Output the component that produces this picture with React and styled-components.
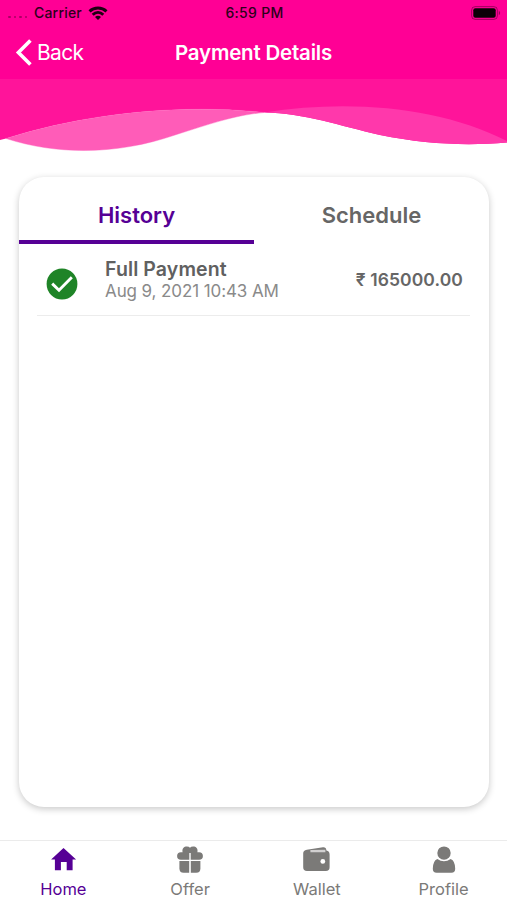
import React, { useState } from 'react';
import styled, { createGlobalStyle } from 'styled-components';

const tabs = ['History', 'Schedule'];

const payments = [
  { title: 'Full Payment', date: 'Aug 9, 2021 10:43 AM', amount: '₹ 165000.00' },
];

function WifiIcon() {
  return (
    <svg width="20" height="14" viewBox="0 0 20 14" fill="none" stroke="#1d0012" strokeWidth="2.9">
      <path d="M1.5 5.4C6.3 0.9 13.7 0.9 18.5 5.4" />
      <path d="M4.7 8.8C7.8 5.8 12.2 5.8 15.3 8.8" />
      <path d="M10 14L7 11C8.8 9.4 11.2 9.4 13 11Z" fill="#1d0012" stroke="none" />
    </svg>
  );
}

function BatteryIcon() {
  return (
    <svg width="30" height="14" viewBox="0 0 30 14">
      <rect x="0.6" y="0.6" width="25.8" height="12.8" rx="3.6" fill="none" stroke="#1d0012" strokeOpacity="0.4" />
      <rect x="2.3" y="2.3" width="22.4" height="9.4" rx="2" fill="#0c0007" />
      <path d="M27.8 4.8C29.6 5.5 29.6 8.5 27.8 9.2Z" fill="#1d0012" fillOpacity="0.45" />
    </svg>
  );
}

function BackIcon() {
  return (
    <svg width="17" height="27" viewBox="0 0 17 27" fill="none" stroke="#fff" strokeWidth="3.6">
      <path d="M15.4 1.4L3.4 13.5L15.4 25.6" />
    </svg>
  );
}

function CheckIcon() {
  return (
    <svg width="32" height="32" viewBox="0 0 32 32">
      <circle cx="16" cy="16" r="15.4" fill="#1f8427" />
      <path d="M6.2 15.6L13 22.2L25.8 9.2" fill="none" stroke="#fff" strokeWidth="2.9" />
    </svg>
  );
}

function HomeIcon() {
  return (
    <svg width="28" height="28" viewBox="0 0 28 28" fill="currentColor">
      <path d="M14.5 2.1L27.1 13.6H23.6V24.3H17.7V16H11.9V24.3H5.9V13.6H2.1Z" />
    </svg>
  );
}

function GiftIcon() {
  return (
    <svg width="28" height="28" viewBox="0 0 28 28" fill="currentColor">
      <path d="M13.3 13.8H4.9A3.8 3.8 0 0 1 4.9 6.2H6.6C5.8 2.4 8 0.4 10.9 0.4Q13 0.4 14 1.7Q15 0.4 17.1 0.4C20 0.4 22.2 2.4 21.4 6.2H23.1A3.8 3.8 0 0 1 23.1 13.8H14.7V7H13.3Z" />
      <path d="M3.4 15.1H13.2V26.8H7.6Q3.4 26.8 3.4 22.6Z" />
      <path d="M14.8 15.1H24.4V22.6Q24.4 26.8 20.2 26.8H14.8Z" />
    </svg>
  );
}

function WalletIcon() {
  return (
    <svg width="28" height="28" viewBox="0 0 28 28" fill="currentColor">
      <path d="M0.2 7.2Q0.2 4.2 3.8 3.7L20 1.2Q23.1 0.9 23.4 4.4Q26.6 4.8 26.6 8.4V21.2Q26.6 25 22.8 25H4Q0.2 25 0.2 21.2Z" />
      <path d="M7.4 4.1L22.4 3.7V6.2H7.4Z" fill="#fff" fillOpacity="0.65" />
      <circle cx="19.8" cy="15.4" r="2.4" fill="#fff" />
    </svg>
  );
}

function ProfileIcon() {
  return (
    <svg width="28" height="28" viewBox="0 0 28 28" fill="currentColor">
      <circle cx="14" cy="7.1" r="6.7" />
      <path d="M7.3 12.9Q14 17.4 20.7 12.9Q25.2 14.9 25.2 22.7Q25.2 26.8 21.4 26.8H6.6Q2.8 26.8 2.8 22.7Q2.8 14.9 7.3 12.9Z" />
    </svg>
  );
}

const navItems = [
  { label: 'Home', icon: <HomeIcon /> },
  { label: 'Offer', icon: <GiftIcon /> },
  { label: 'Wallet', icon: <WalletIcon /> },
  { label: 'Profile', icon: <ProfileIcon /> },
];

function App() {
  const [activeTab, setActiveTab] = useState('History');
  const [activePage, setActivePage] = useState('Home');

  return (
    <Screen>
      <GlobalStyle />
      <Header>
        <StatusBar>
          <Carrier>
            <Dots><i /><i /><i /><i /></Dots>
            <span>Carrier</span>
            <WifiIcon />
          </Carrier>
          <Time>6:59 PM</Time>
          <Battery><BatteryIcon /></Battery>
        </StatusBar>
        <TitleBar>
          <BackButton>
            <BackIcon />
            <span>Back</span>
          </BackButton>
          <Title>Payment Details</Title>
        </TitleBar>
      </Header>
      <Wave viewBox="0 0 507 80">
        <path d="M0 0H507V63.5C465 67 425 65 380 56C340 47 305 34 264 33.5C185 25 90 33 6 59.5L0 61Z" fill="#ff149a" />
        <path d="M6 59.5C90 33 185 25 264 33.5C235 36 210 45 175 56C120 75 60 77 6 59.5Z" fill="#ff5cb8" stroke="#ff5cb8" strokeWidth="0.4" />
        <path d="M264 33.5C350 20 440 28 507 62V63.5C465 67 425 65 380 56C340 47 305 34 264 33.5Z" fill="#ff38ab" />
      </Wave>
      <Card>
        <Tabs>
          {tabs.map((tab) => (
            <Tab key={tab} $active={tab === activeTab} onClick={() => setActiveTab(tab)}>
              {tab}
            </Tab>
          ))}
        </Tabs>
        {activeTab === 'History' && payments.map((payment) => (
          <Payment key={payment.date}>
            <Status><CheckIcon /></Status>
            <Info>
              <Name>{payment.title}</Name>
              <PaidAt>{payment.date}</PaidAt>
            </Info>
            <Amount>{payment.amount}</Amount>
          </Payment>
        ))}
      </Card>
      <BottomNav>
        {navItems.map((item) => (
          <NavItem key={item.label} $active={item.label === activePage} onClick={() => setActivePage(item.label)}>
            {item.icon}
            <NavLabel>{item.label}</NavLabel>
          </NavItem>
        ))}
      </BottomNav>
    </Screen>
  );
}

const GlobalStyle = createGlobalStyle`
  * {
    box-sizing: border-box;
  }

  body {
    margin: 0;
    background: #fff;
    font-family: Inter, "Liberation Sans", sans-serif;
  }

  button {
    padding: 0;
    border: 0;
    background: none;
    font-family: inherit;
    cursor: pointer;
  }

  svg {
    display: block;
    flex-shrink: 0;
  }
`

const Screen = styled.div`
  display: flex;
  flex-direction: column;
  height: 900px;
  overflow: hidden;
`

const Header = styled.header`
  height: 79px;
  background: #ff0095;
`

const StatusBar = styled.div`
  display: grid;
  grid-template-columns: 1fr auto 1fr;
  align-items: center;
  height: 26px;
  padding: 0 6px 0 8px;
  color: #2b001a;
  font-size: 14px;
  font-weight: 500;
  line-height: 18px;
`

const Carrier = styled.div`
  display: flex;
  align-items: center;
  gap: 6px;
  letter-spacing: 0.2px;
`

const Dots = styled.div`
  display: flex;
  gap: 3px;
  width: 20px;
  padding-top: 8px;

  i {
    width: 2.5px;
    height: 2px;
    border-radius: 1px;
    background: rgba(43, 0, 26, 0.4);
  }
`

const Time = styled.div`
  letter-spacing: 0.3px;
`

const Battery = styled.div`
  display: flex;
  justify-content: flex-end;
`

const TitleBar = styled.div`
  display: grid;
  grid-template-columns: 1fr auto 1fr;
  align-items: center;
  height: 53px;
  padding: 0 15px;
`

const BackButton = styled.button`
  display: flex;
  align-items: center;
  gap: 5px;
  color: #fff;
  font-size: 21px;
  letter-spacing: -0.7px;
`

const Title = styled.h1`
  margin: 0;
  color: #fff;
  font-size: 20.5px;
  font-weight: 600;
  letter-spacing: -0.2px;
`

const Wave = styled.svg`
  width: 507px;
  height: 80px;
`

const Card = styled.main`
  flex: 1;
  margin: 18px 18px 33px 19px;
  border-radius: 25px;
  background: #fff;
  box-shadow: 0 2px 7px rgba(0, 0, 0, 0.22);
`

const Tabs = styled.div`
  display: flex;
  height: 67px;
`

const Tab = styled.button`
  flex: 1;
  padding-top: 12px;
  border-bottom: 4px solid ${props => props.$active ? "#560095" : "transparent"};
  color: ${props => props.$active ? "#560095" : "#666"};
  font-size: 22px;
  font-weight: 600;
`

const Payment = styled.div`
  display: flex;
  align-items: center;
  height: 72px;
  margin: 0 19px 0 18px;
  padding: 0 7px 0 9px;
  border-bottom: 1px solid #ececec;
`

const Status = styled.div`
  padding-top: 8px;
`

const Info = styled.div`
  flex: 1;
  margin-left: 27px;
`

const Name = styled.div`
  color: #606060;
  font-size: 19.5px;
  font-weight: 600;
  line-height: 22px;
  letter-spacing: 0.1px;
`

const PaidAt = styled.div`
  color: #8a8a8a;
  font-size: 17px;
  line-height: 22px;
  letter-spacing: -0.1px;
`

const Amount = styled.div`
  color: #666;
  font-size: 17.5px;
  font-weight: 600;
  letter-spacing: 0.1px;
`

const BottomNav = styled.nav`
  display: flex;
  height: 60px;
  border-top: 1px solid #ebebeb;
`

const NavItem = styled.button`
  display: flex;
  flex: 1;
  flex-direction: column;
  align-items: center;
  padding-top: 5px;
  color: ${props => props.$active ? "#560095" : "#7b7a78"};
`

const NavLabel = styled.span`
  margin-top: 5px;
  font-size: 16.5px;
  line-height: 20px;
`

export default App;
